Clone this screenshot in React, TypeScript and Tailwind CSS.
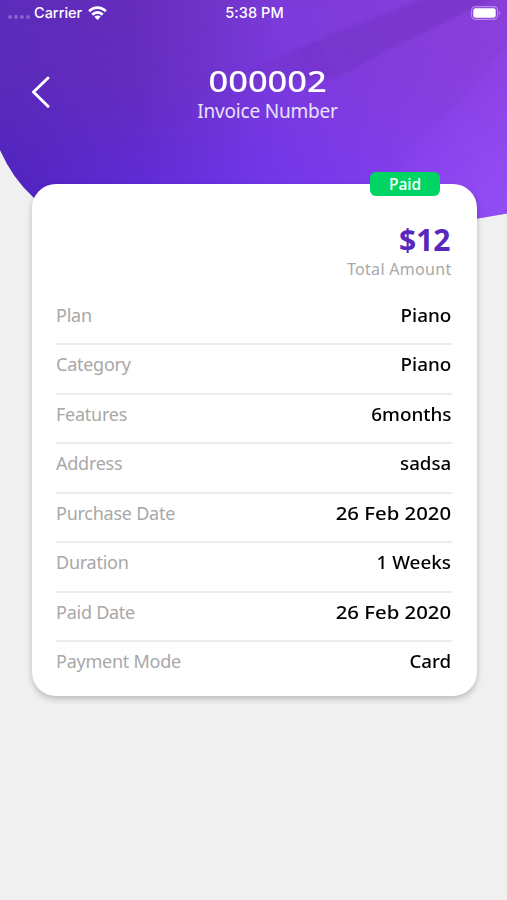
import React from "react";

interface InvoiceRow {
  label: string;
  value: string;
  valueClass: string;
}

const rows: InvoiceRow[] = [
  { label: "Plan", value: "Piano", valueClass: "scale-x-[1.05]" },
  { label: "Category", value: "Piano", valueClass: "scale-x-[1.05]" },
  { label: "Features", value: "6months", valueClass: "scale-x-[1.05]" },
  { label: "Address", value: "sadsa", valueClass: "scale-x-[1.04]" },
  { label: "Purchase Date", value: "26 Feb 2020", valueClass: "scale-x-[1.13]" },
  { label: "Duration", value: "1 Weeks", valueClass: "scale-x-[1.05]" },
  { label: "Paid Date", value: "26 Feb 2020", valueClass: "scale-x-[1.13]" },
  { label: "Payment Mode", value: "Card", valueClass: "scale-x-[1.04]" },
];

function HeaderBackground() {
  return (
    <svg
      className="absolute inset-x-0 top-0 h-[230px] w-full"
      viewBox="0 0 507 230"
      preserveAspectRatio="none"
      aria-hidden="true"
    >
      <defs>
        <linearGradient id="base" gradientUnits="userSpaceOnUse" x1="0" y1="150" x2="507" y2="150">
          <stop offset="0" stopColor="#4f22be" />
          <stop offset="0.25" stopColor="#5d2ad8" />
          <stop offset="0.5" stopColor="#6f35ed" />
          <stop offset="0.75" stopColor="#803df0" />
          <stop offset="1" stopColor="#8c47f3" />
        </linearGradient>
        <linearGradient id="top" gradientUnits="userSpaceOnUse" x1="0" y1="0" x2="507" y2="0">
          <stop offset="0" stopColor="#5c2cba" />
          <stop offset="0.25" stopColor="#652cba" />
          <stop offset="0.42" stopColor="#7134c9" />
          <stop offset="0.55" stopColor="#7c3ada" />
          <stop offset="1" stopColor="#8a3fd9" />
        </linearGradient>
        <linearGradient id="fade" x1="0" y1="0" x2="0" y2="1">
          <stop offset="0" stopColor="white" />
          <stop offset="0.35" stopColor="white" stopOpacity="0.85" />
          <stop offset="0.9" stopColor="white" stopOpacity="0" />
        </linearGradient>
        <linearGradient id="band" gradientUnits="userSpaceOnUse" x1="440" y1="10" x2="215" y2="105">
          <stop offset="0" stopColor="#6f2fbd" stopOpacity="0.45" />
          <stop offset="0.6" stopColor="#6a2cb8" stopOpacity="0.35" />
          <stop offset="1" stopColor="#6a2cb8" stopOpacity="0" />
        </linearGradient>
        <linearGradient id="corner" gradientUnits="userSpaceOnUse" x1="435" y1="110" x2="507" y2="170">
          <stop offset="0" stopColor="#9448f8" stopOpacity="0" />
          <stop offset="0.3" stopColor="#9448f8" stopOpacity="0.35" />
          <stop offset="1" stopColor="#9a55f6" stopOpacity="0.4" />
        </linearGradient>
        <filter id="soften" x="-10%" y="-10%" width="120%" height="120%">
          <feGaussianBlur stdDeviation="1.5" />
        </filter>
        {/* luminance would darken the lower half, so mask by alpha */}
        <mask id="fadeMask" style={{ maskType: "alpha" }}>
          <rect width="507" height="230" fill="url(#fade)" />
        </mask>
        <clipPath id="shape">
          <path d="M0 0H507V213.5L452 223Q100 250 33 197Q13 179 0 150Z" />
        </clipPath>
      </defs>
      <g clipPath="url(#shape)">
        <rect width="507" height="230" fill="url(#base)" />
        <rect width="507" height="230" fill="url(#top)" mask="url(#fadeMask)" />
        <g filter="url(#soften)">
          <path d="M425 -2L330 35L270 60L215 92L340 76L400 44L495 -2Z" fill="url(#band)" />
          <path d="M507 45L450 110L350 190L330 230H515V45Z" fill="url(#corner)" />
        </g>
      </g>
    </svg>
  );
}

function StatusBar() {
  return (
    <div className="grid h-[26px] grid-cols-3 items-center pr-[6px] pl-2 font-['Inter',sans-serif] text-[14.5px] font-medium text-white">
      <div className="flex items-center">
        <div className="mt-[8px] flex gap-[2px]">
          <span className="size-[4px] rounded-full bg-white/25" />
          <span className="size-[4px] rounded-full bg-white/25" />
          <span className="size-[4px] rounded-full bg-white/25" />
          <span className="size-[4px] rounded-full bg-white/25" />
        </div>
        <span className="ml-1 w-[49px] whitespace-nowrap">Carrier</span>
        <svg className="ml-[5px] h-[14px] w-[19px]" viewBox="0 0 19 14" fill="none" stroke="white" strokeWidth="2.8">
          <path d="M1.2 5.3C6 0.3 13 0.3 17.8 5.3" />
          <path d="M4.3 8.7C7.3 5.7 11.7 5.7 14.7 8.7" />
          <path d="M9.5 14L6.3 10.8C8.2 9.2 10.8 9.2 12.7 10.8Z" fill="white" stroke="none" />
        </svg>
      </div>
      <span className="text-center tracking-[0.1px] whitespace-nowrap">5:38 PM</span>
      <svg className="h-[14px] w-[30px] justify-self-end" viewBox="0 0 30 14" fill="none">
        <rect x="0.6" y="0.6" width="26" height="12.8" rx="3.8" stroke="white" strokeOpacity="0.4" strokeWidth="1.1" />
        <rect x="2.3" y="2.3" width="22.4" height="9.4" rx="2.2" fill="white" />
        <path d="M28.2 5C29.6 5.5 29.6 8.5 28.2 9Z" fill="white" fillOpacity="0.4" />
      </svg>
    </div>
  );
}

export default function App() {
  return (
    <div className="relative h-[900px] w-full overflow-hidden bg-[#f0f0f0] font-['Noto_Sans',sans-serif]">
      <HeaderBackground />
      <div className="relative">
        <StatusBar />

        <header className="grid h-[158px] grid-cols-[507px]">
          <button className="col-start-1 row-start-1 mt-[50px] ml-[31px] h-[33px] w-5 self-start" aria-label="Back">
            <svg className="h-[33px] w-5" viewBox="0 0 20 33" fill="none" stroke="white" strokeWidth="2.9" strokeLinecap="round" strokeLinejoin="round">
              <path d="M17 2L2.5 16L17 30.2" />
            </svg>
          </button>
          <div className="col-start-1 row-start-1 flex flex-col items-center pt-[36px] pl-[28px] text-white">
            <h1 className="scale-x-[1.17] text-[29.5px] leading-[38px] font-medium">000002</h1>
            <p className="text-[19px] leading-[22px] font-normal tracking-[-0.2px] text-white/85">Invoice Number</p>
          </div>
        </header>

        <main className="relative ml-[31.5px] h-[512px] w-[445px] rounded-[24px] bg-white pr-[25px] pl-[24.5px] shadow-[0_3px_6px_rgba(0,0,0,0.22)]">
          <span className="absolute -top-3 right-[36.5px] flex h-6 w-[70px] items-center justify-center rounded-[6px] bg-[#00d563] pt-px text-[15.5px] font-medium text-white">
            Paid
          </span>
          <div className="flex flex-col items-end pt-[36px]">
            <span className="mr-px text-[30px] leading-[40px] font-bold text-[#5728bd]">$12</span>
            <span className="text-[16px] leading-[18px] tracking-[0.3px] text-[#a8a8a8]">Total Amount</span>
          </div>
          <dl className="mt-[17.5px]">
            {rows.map((row) => (
              <div
                key={row.label}
                className="flex h-[49.5px] items-start justify-between border-b-2 border-[#ececec] pt-[6.4px] text-[18px] leading-[26px] last:border-b-0"
              >
                <dt className="tracking-[-0.25px] text-[#a8a8a8]">{row.label}</dt>
                <dd className={`origin-right font-medium text-black ${row.valueClass}`}>{row.value}</dd>
              </div>
            ))}
          </dl>
        </main>
      </div>
    </div>
  );
}
